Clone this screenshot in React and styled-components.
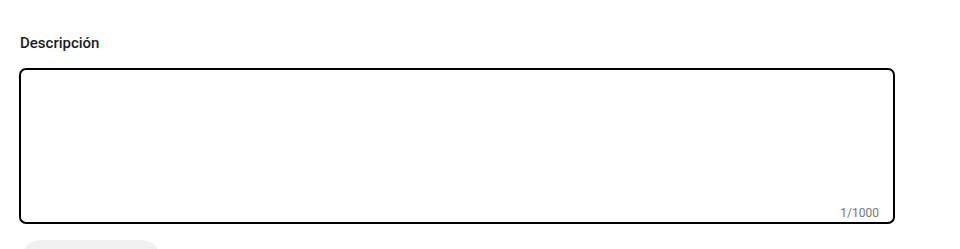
import React from "react";
import styled, { createGlobalStyle } from "styled-components";

const Global = createGlobalStyle`
  html, body { margin: 0; padding: 0; background: #fff; overflow: hidden; }
  body { font-family: Roboto, "Noto Sans", Arial, sans-serif; }
`;

const Page = styled.div`
  padding: 33px 0 0 19px;
  width: 876px;
  display: flex;
  flex-direction: column;
`;

const Label = styled.label`
  font-size: 15px;
  font-weight: 500;
  color: #1c1b1f;
  line-height: 20px;
  padding-left: 1px;
  margin-bottom: 15px;
`;

const Field = styled.div`
  position: relative;
  height: 156px;
  border: 2px solid #000;
  border-radius: 7px;
  box-sizing: border-box;
`;

const Area = styled.textarea`
  width: 100%;
  height: 100%;
  border: none;
  outline: none;
  resize: none;
  background: transparent;
  box-sizing: border-box;
  padding: 12px 16px;
  font-family: inherit;
  font-size: 14px;
`;

const Counter = styled.span`
  position: absolute;
  right: 14px;
  bottom: 1px;
  font-size: 12px;
  line-height: 16px;
  color: #757575;
`;

const Pill = styled.div`
  margin-top: 16px;
  margin-left: 2px;
  width: 140px;
  height: 40px;
  border-radius: 20px;
  background: #f0f0f0;
`;

export default function App() {
  return (
    <>
      <Global />
      <Page>
        <Label>Descripción</Label>
        <Field>
          <Area />
          <Counter>1/1000</Counter>
        </Field>
        <Pill />
      </Page>
    </>
  );
}
